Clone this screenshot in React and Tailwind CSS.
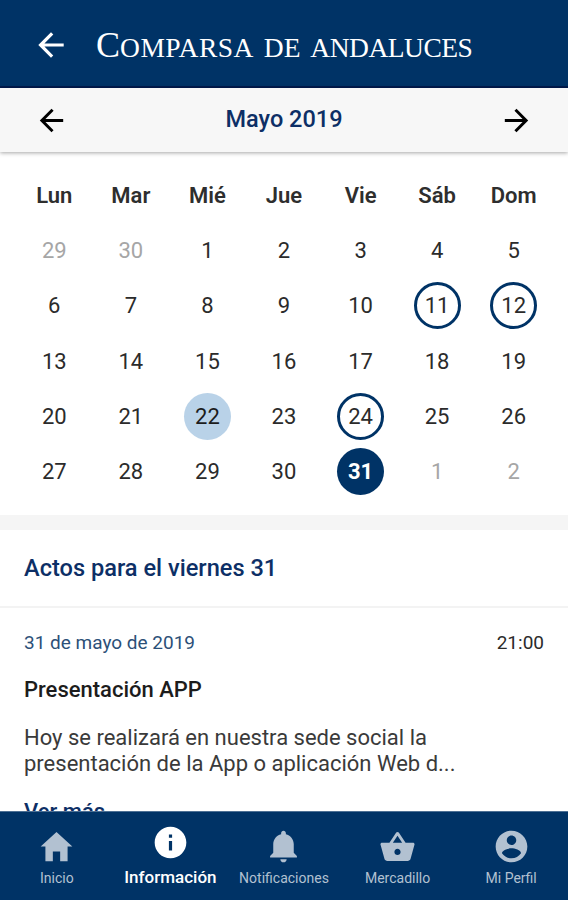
import React, { useState } from 'react';
import {
  IoMdArrowBack,
  IoMdArrowForward,
  IoMdHome,
  IoMdInformationCircle,
  IoMdNotifications,
  IoMdBasket,
  IoMdContact,
} from 'react-icons/io';

const weekDays = ['Lun', 'Mar', 'Mié', 'Jue', 'Vie', 'Sáb', 'Dom'];

const TODAY = 22;
const daysWithEvents = [11, 12, 24, 31];

// Monday based grid, padded with the days of the neighbouring months
const days = [
  { day: 29, outside: true },
  { day: 30, outside: true },
  ...Array.from({ length: 31 }, (_, i) => ({ day: i + 1, outside: false })),
  { day: 1, outside: true },
  { day: 2, outside: true },
];

const tabs = [
  { label: 'Inicio', icon: IoMdHome },
  { label: 'Información', icon: IoMdInformationCircle },
  { label: 'Notificaciones', icon: IoMdNotifications },
  { label: 'Mercadillo', icon: IoMdBasket },
  { label: 'Mi Perfil', icon: IoMdContact },
];

const dayStyle = ({ day, outside }, selected) => {
  if (outside) return 'text-[#a6a6a6]';
  if (day === selected) return 'bg-[#003366] text-white font-bold';
  if (day === TODAY) return 'bg-[#b9d2e8] text-[#1c1c1c]';
  if (daysWithEvents.includes(day)) return 'border-3 border-[#003366] text-[#2b2b2b]';
  return 'text-[#2b2b2b]';
};

const Calendar = ({ selected, onSelect }) => (
  <section className="px-4 pt-[17px] h-[363px] shrink-0">
    <div className="grid grid-cols-7 h-[53px] items-center">
      {weekDays.map((name) => (
        <span key={name} className="text-center text-[22px] font-semibold text-[#2e2e2e]">
          {name}
        </span>
      ))}
    </div>
    <div className="grid grid-cols-7 auto-rows-[55.2px] place-items-center pt-[1.2px]">
      {days.map((item, index) => (
        <button
          key={index}
          type="button"
          onClick={() => !item.outside && onSelect(item.day)}
          className={`w-[47px] h-[47px] rounded-full flex items-center justify-center text-[22px] ${dayStyle(item, selected)}`}
        >
          {item.day}
        </button>
      ))}
    </div>
  </section>
);

const TabBar = ({ active, onChange }) => (
  <nav className="h-[89px] shrink-0 grid grid-cols-5 bg-[#003366] border-t border-[#4d7094]">
    {tabs.map(({ label, icon: Icon }) => {
      const isActive = label === active;
      return (
        <button
          key={label}
          type="button"
          onClick={() => onChange(label)}
          className={`flex flex-col items-center whitespace-nowrap ${
            isActive ? 'pt-[11px] text-white' : 'pt-[15px] text-[#b2c1d1]'
          }`}
        >
          <Icon className="w-[39px] h-[39px]" />
          <span className={isActive ? 'text-[17px] leading-6 mt-[3px] font-medium' : 'text-[14px] leading-6'}>
            {label}
          </span>
        </button>
      );
    })}
  </nav>
);

const App = () => {
  const [selected, setSelected] = useState(31);
  const [activeTab, setActiveTab] = useState('Información');

  return (
    <div className="w-[568px] h-[900px] flex flex-col overflow-hidden bg-white font-['Roboto',sans-serif]">
      <header className="h-[88px] shrink-0 flex items-center pl-8 bg-[#003366] border-b-2 border-[#001a4d] text-white">
        <IoMdArrowBack className="w-[38px] h-[38px] mt-[3px]" />
        <h1 className="ml-[26px] mt-1 flex items-baseline whitespace-nowrap font-['Liberation_Serif',serif] text-[36px] leading-none">
          C
          <span className="text-[27.5px] uppercase whitespace-pre">
            <span className="tracking-[0.5px]">omparsa </span>
            <span className="ml-[4px]">de </span>
            <span className="ml-[3px] tracking-[-0.5px]">andaluces</span>
          </span>
        </h1>
      </header>

      <div className="h-[64px] shrink-0 flex items-center justify-between px-[34px] bg-[#f7f7f7] text-black shadow-[0_1px_4px_rgba(0,0,0,0.35)]">
        <IoMdArrowBack className="w-[35px] h-[35px]" />
        <h2 className="text-[23.5px] font-medium text-[#0d2f66]">Mayo 2019</h2>
        <IoMdArrowForward className="w-[35px] h-[35px]" />
      </div>

      <Calendar selected={selected} onSelect={setSelected} />

      <div className="h-[15px] shrink-0 bg-[#f5f5f5]" />

      <section className="flex-1 min-h-0 overflow-hidden">
        <h3 className="h-[78px] flex items-center px-6 pt-px border-b-2 border-[#f3f3f3] text-[23.6px] font-medium text-[#0d2f66]">
          Actos para el viernes {selected}
        </h3>
        <article className="px-6 pt-[23px]">
          <div className="flex justify-between text-[19px] leading-6">
            <span className="text-[#2c5078]">31 de mayo de 2019</span>
            <span className="text-[#2b2b2b]">21:00</span>
          </div>
          <h4 className="mt-[23px] text-[22px] leading-6 font-medium text-[#1c1c1c]">Presentación APP</h4>
          <p className="mt-[23px] w-[460px] text-[22px] leading-[26px] text-[#3a3a3a]">
            Hoy se realizará en nuestra sede social la presentación de la App o aplicación Web d...
          </p>
          <button type="button" className="mt-[23px] text-[22px] leading-6 font-medium text-[#0d2f66]">
            Ver más
          </button>
        </article>
      </section>

      <TabBar active={activeTab} onChange={setActiveTab} />
    </div>
  );
};

export default App;
